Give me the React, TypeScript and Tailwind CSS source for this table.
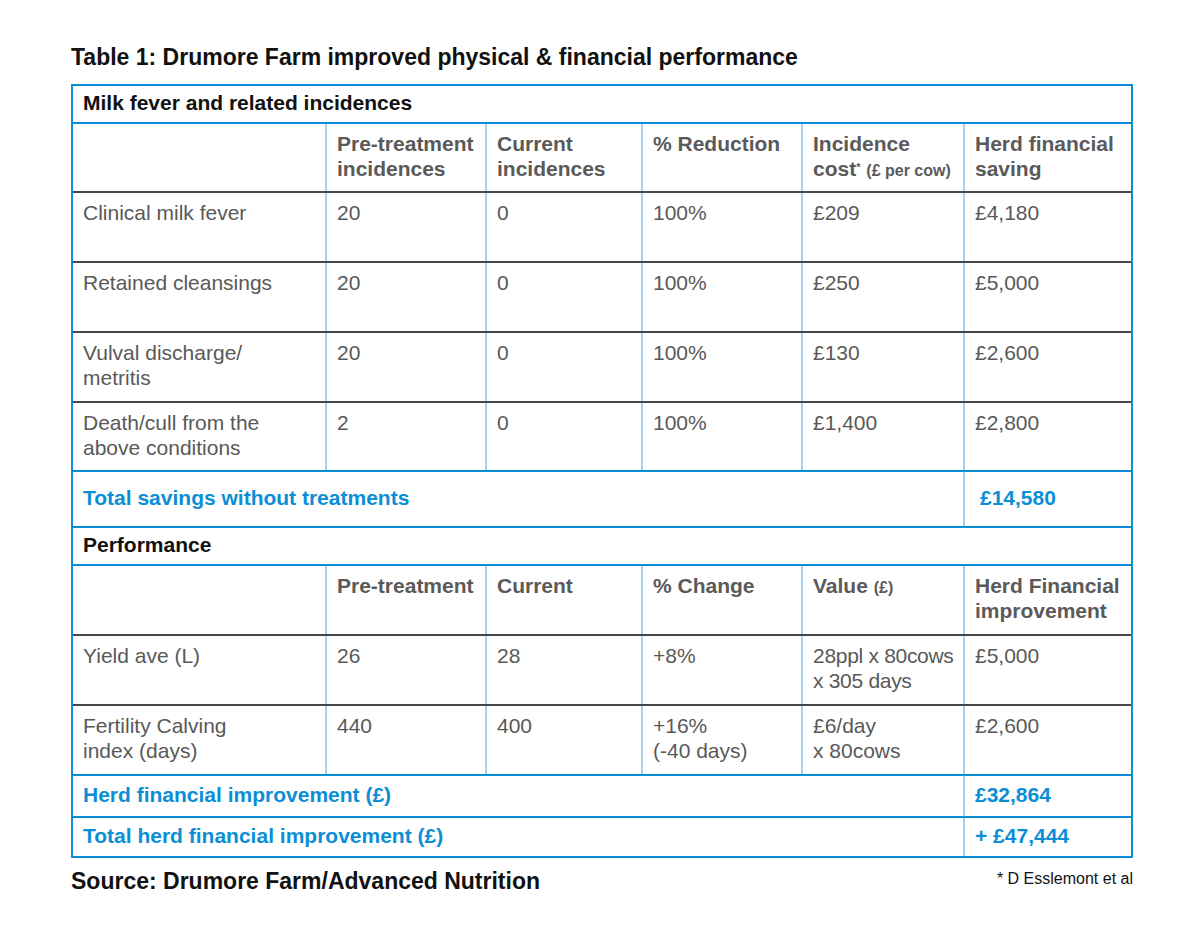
const widths = ["w-[252px]", "w-[160px]", "w-[156px]", "w-[160px]", "w-[162px]", "w-[168px]"];

type Cell = React.ReactNode;

function Row({
  cells,
  height,
  border,
  head,
}: {
  cells: Cell[];
  height: string;
  border: string;
  head?: boolean;
}) {
  return (
    <div className={`flex ${height} ${border} border-b-2`}>
      {cells.map((c, i) => (
        <div
          key={i}
          className={`${widths[i]} shrink-0 whitespace-nowrap px-[10px] pt-[7px] leading-[25px] ${
            i > 0 ? "border-l-2 border-[#a9d2f0]" : ""
          } ${head ? "font-bold text-[#5a5a5a]" : "text-[#595959]"}`}
        >
          {c}
        </div>
      ))}
    </div>
  );
}

function SectionRow({ title, height, border }: { title: string; height: string; border: string }) {
  return (
    <div className={`flex items-center ${height} ${border} border-b-2 px-[10px] pb-[2px] font-bold text-[#111]`}>
      {title}
    </div>
  );
}

function TotalRow({
  label,
  value,
  height,
  border,
  valuePad,
}: {
  label: string;
  value: string;
  height: string;
  border: string;
  valuePad: string;
}) {
  return (
    <div className={`flex ${height} ${border} font-bold text-[#0b8ed6]`}>
      <div className="flex w-[890px] shrink-0 items-center px-[10px] pb-[2px]">{label}</div>
      <div className={`flex w-[168px] shrink-0 items-center border-l-2 border-l-[#a9d2f0] ${valuePad} pb-[2px]`}>
        {value}
      </div>
    </div>
  );
}

const dark = "border-b-[#474747]";
const blue = "border-b-[#0b8ed6]";

export default function App() {
  return (
    <div
      className="min-h-[945px] w-[1200px] bg-white pl-[71px] pt-[43px]"
      style={{ fontFamily: '"Liberation Sans", Arial, sans-serif' }}
    >
      <h1 className="text-[23px] font-bold leading-[28px] text-[#111]">
        Table 1: Drumore Farm improved physical &amp; financial performance
      </h1>

      <div className="mt-[13px] w-[1062px] border-2 border-[#0b8ed6] text-[21px]">
        <SectionRow title="Milk fever and related incidences" height="h-[38px]" border={blue} />
        <Row
          head
          height="h-[69px]"
          border={dark}
          cells={[
            "",
            <>Pre-treatment<br />incidences</>,
            <>Current<br />incidences</>,
            "% Reduction",
            <>
              Incidence
              <br />
              cost<sup className="text-[11px]">*</sup>{" "}
              <span className="text-[16px]">(£ per cow)</span>
            </>,
            <>Herd financial<br />saving</>,
          ]}
        />
        <Row height="h-[70px]" border={dark} cells={["Clinical milk fever", "20", "0", "100%", "£209", "£4,180"]} />
        <Row height="h-[70px]" border={dark} cells={["Retained cleansings", "20", "0", "100%", "£250", "£5,000"]} />
        <Row
          height="h-[70px]"
          border={dark}
          cells={[<>Vulval discharge/<br />metritis</>, "20", "0", "100%", "£130", "£2,600"]}
        />
        <Row
          height="h-[69px]"
          border={blue}
          cells={[<>Death/cull from the<br />above conditions</>, "2", "0", "100%", "£1,400", "£2,800"]}
        />
        <TotalRow
          label="Total savings without treatments"
          value="£14,580"
          height="h-[56px] border-b-2"
          border={blue}
          valuePad="pl-[15px]"
        />
        <SectionRow title="Performance" height="h-[38px]" border={blue} />
        <Row
          head
          height="h-[70px]"
          border={dark}
          cells={[
            "",
            "Pre-treatment",
            "Current",
            "% Change",
            <>
              Value <span className="text-[16px]">(£)</span>
            </>,
            <>Herd Financial<br />improvement</>,
          ]}
        />
        <Row
          height="h-[70px]"
          border={dark}
          cells={[
            "Yield ave (L)",
            "26",
            "28",
            "+8%",
            <span className="tracking-[-0.3px]">28ppl x 80cows<br />x 305 days</span>,
            "£5,000",
          ]}
        />
        <Row
          height="h-[70px]"
          border={blue}
          cells={[
            <>Fertility Calving<br />index (days)</>,
            "440",
            "400",
            <>+16%<br />(-40 days)</>,
            <>£6/day<br />x 80cows</>,
            "£2,600",
          ]}
        />
        <TotalRow
          label="Herd financial improvement (£)"
          value="£32,864"
          height="h-[42px] border-b-2"
          border={blue}
          valuePad="pl-[10px]"
        />
        <TotalRow
          label="Total herd financial improvement (£)"
          value="+ £47,444"
          height="h-[38px]"
          border=""
          valuePad="pl-[10px]"
        />
      </div>

      <div className="flex w-[1062px] items-start justify-between pt-[9px]">
        <div className="text-[23px] font-bold leading-[28px] text-[#111]">
          Source: Drumore Farm/Advanced Nutrition
        </div>
        <div className="pt-[2px] text-[16px] leading-[20px] text-[#111]">* D Esslemont et al</div>
      </div>
    </div>
  );
}
